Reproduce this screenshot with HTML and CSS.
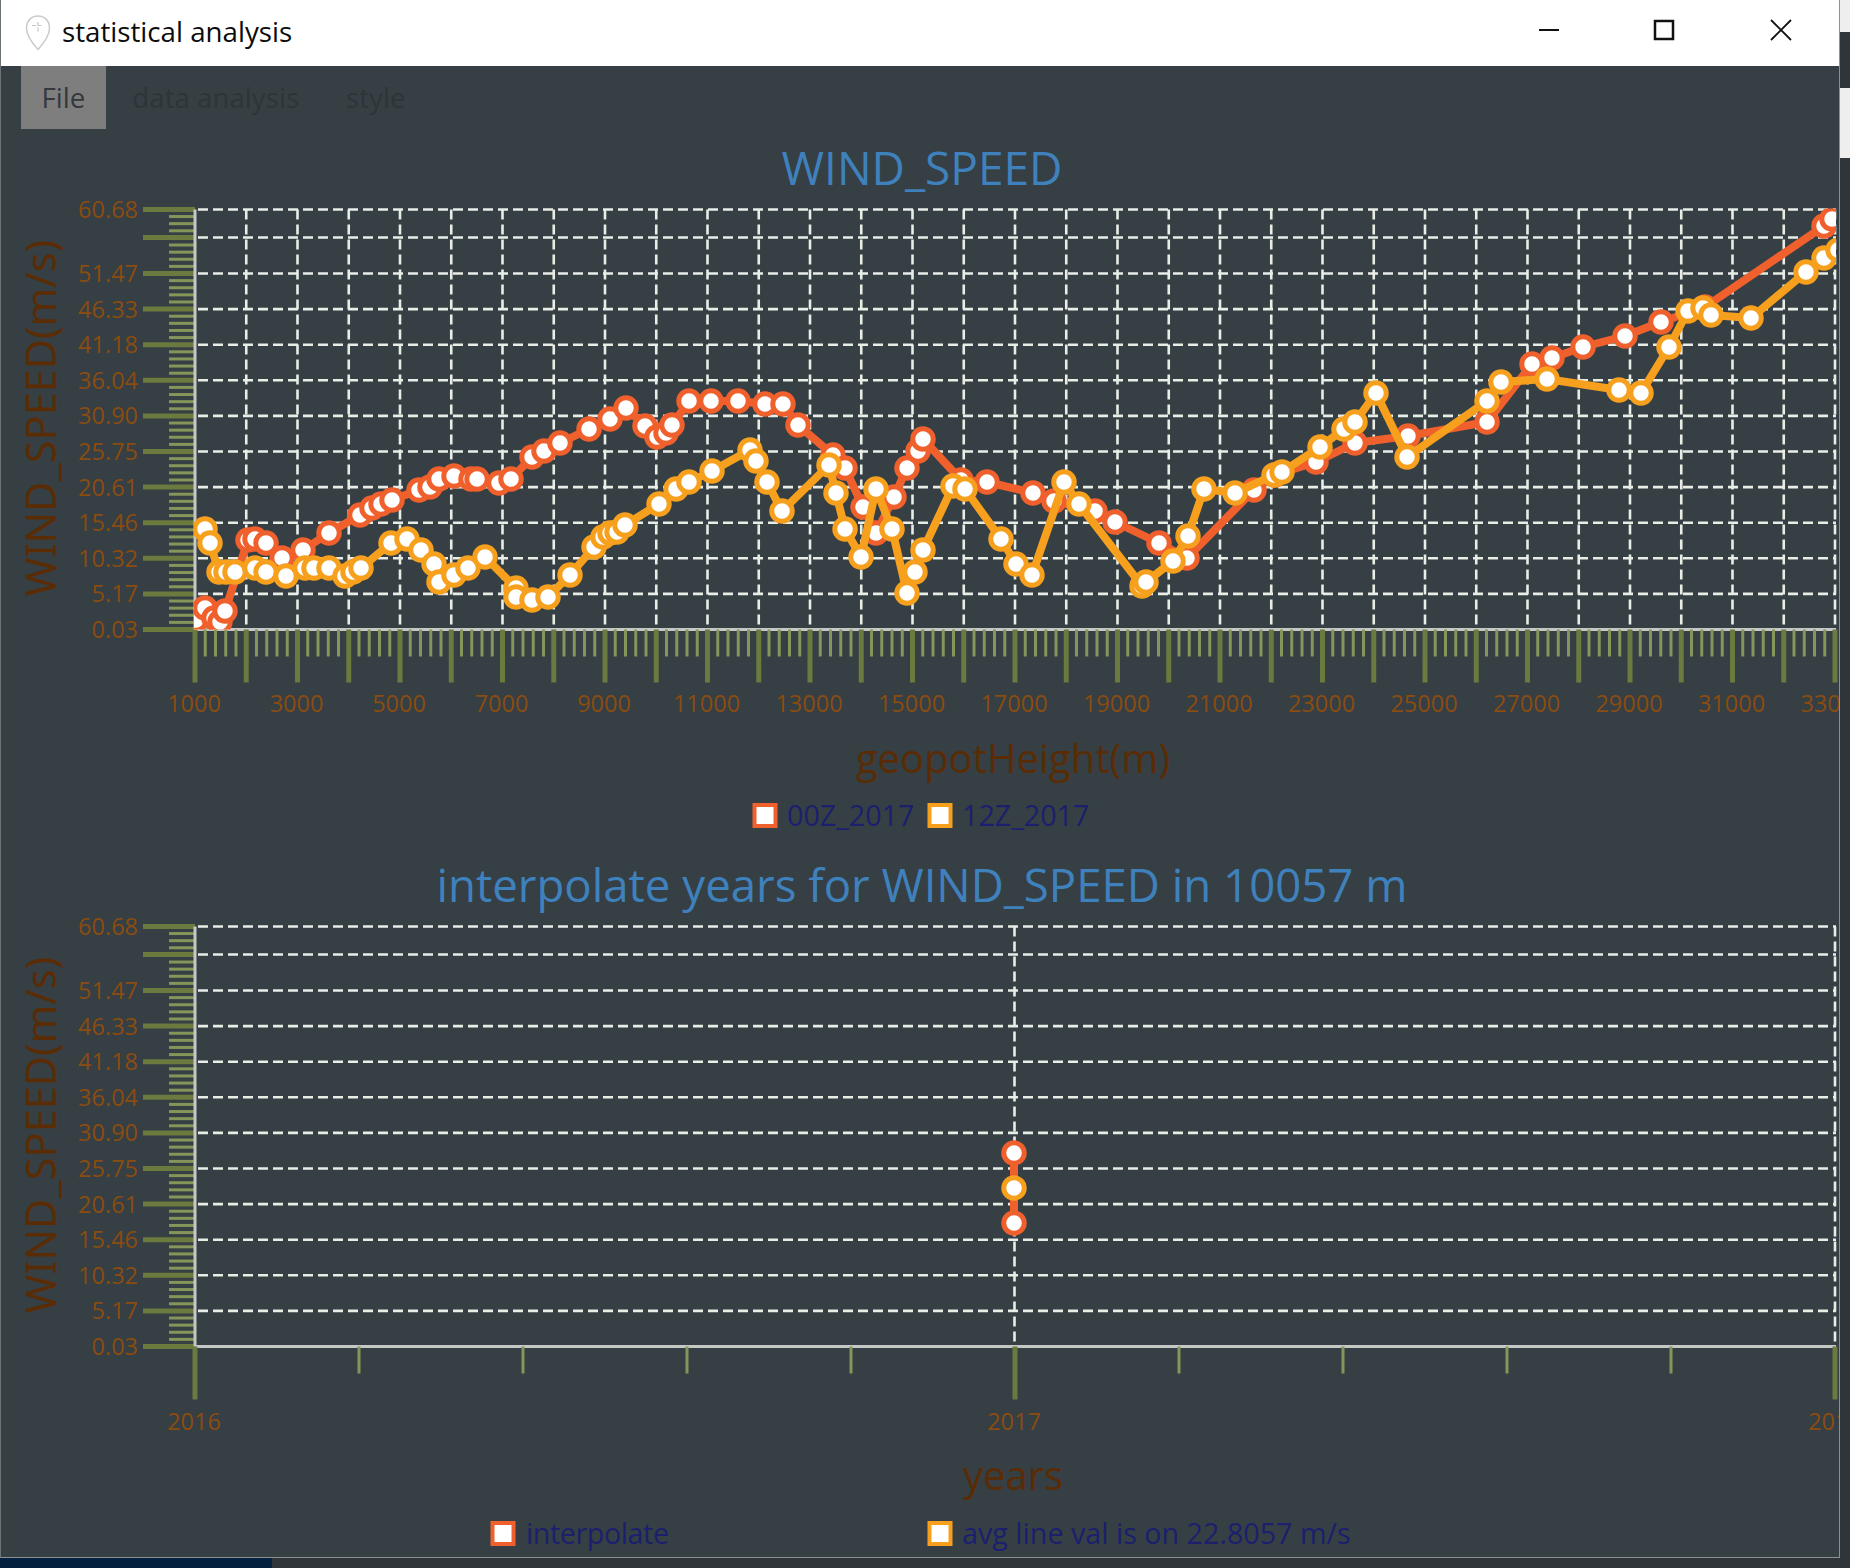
FILE: index.html
```html
<!DOCTYPE html>
<html>
<head>
  <meta charset="utf-8">
  <title>statistical analysis</title>
  <link rel="stylesheet" href="styles.css">
</head>
<body>
  <div class="desktop">
    <div class="window">
      <div class="titlebar">
        <svg class="app-icon" viewBox="0 0 26 36" width="26" height="36">
          <path d="M13 1C6 1 1.500 6 1.500 13C1.500 21 8 29 13 34.500C18 29 24.500 21 24.500 13C24.500 6 20 1 13 1Z" fill="#fff" stroke="#c9cbcb" stroke-width="1.500"/>
          <path d="M13 7V17M7 10.500H18" fill="none" stroke="#c4c6c6" stroke-width="1.200" stroke-dasharray="4 1.500"/>
        </svg>
        <span class="app-name">statistical analysis</span>
        <div class="win-buttons">
          <svg class="win-btn" viewBox="0 0 22 22" width="22" height="22"><path d="M1 11H21" stroke="#111" stroke-width="2"/></svg>
          <svg class="win-btn" viewBox="0 0 22 22" width="22" height="22"><rect x="2" y="2" width="18" height="18" fill="none" stroke="#111" stroke-width="2.500"/></svg>
          <svg class="win-btn win-close" viewBox="0 0 22 22" width="22" height="22"><path d="M1 1L21 21M21 1L1 21" stroke="#111" stroke-width="1.800"/></svg>
        </div>
      </div>
      <div class="menubar">
        <span class="menu-item active">File</span>
        <span class="menu-item">data analysis</span>
        <span class="menu-item">style</span>
      </div>
      <div class="chart" id="chart1"></div>
      <div class="chart" id="chart2"></div>
    </div>
    <div class="taskbar"><div class="task-active"></div></div>
    <div class="side-stub stub-top"></div>
    <div class="side-stub stub-mid"></div>
  </div>
  <script src="chart.js"></script>
</body>
</html>
```
FILE: styles.css
```css
html, body {
  margin: 0;
  padding: 0;
  background: #2b3136;
}

.desktop {
  width: 1850px;
  height: 1568px;
  position: relative;
  overflow: hidden;
  background: #2f3539;
  font-family: "Open Sans", "Noto Sans", sans-serif;
}

.window {
  width: 1840px;
  height: 1558px;
  box-sizing: border-box;
  background: #363f44;
  border-left: 1px solid #6d7478;
  border-right: 1px solid #8a9094;
  border-bottom: 1px solid #8a9094;
  overflow: hidden;
}

.titlebar {
  height: 66px;
  background: #fff;
  display: flex;
  align-items: center;
  padding-left: 24px;
}

.app-icon {
  margin-right: 11px;
}

.app-name {
  font-size: 27.700px;
  color: #0c0c0c;
  flex: 1;
  margin-top: -4px;
}

.win-buttons {
  display: flex;
  gap: 93px;
  padding-right: 47px;
  margin-top: -6px;
}

.win-btn {
  display: block;
}

.win-close {
  margin-left: 2px;
}

.menubar {
  height: 64px;
  display: flex;
  gap: 6px;
  padding-left: 20px;
  font-size: 27.700px;
  color: #2e3438;
}

.menu-item {
  padding: 12px 20.500px 0 20.500px;
  height: 63px;
  box-sizing: border-box;
}

.active {
  background: #7e7e7e;
  color: #33393d;
}

.chart {
  height: 717px;
}

.chart svg {
  display: block;
  margin-left: -1px;
}

.chart-title {
  font-size: 46px;
  fill: #3f81bc;
  text-anchor: middle;
}

.chart-title-long {
  font-size: 45.600px;
}

.axis-title {
  font-size: 40px;
  fill: #5a2c05;
  text-anchor: middle;
}

.axis-title-y {
  font-family: "Noto Sans", sans-serif;
  font-size: 41.500px;
}

.tick-label {
  font-size: 23.500px;
  fill: #8a4c10;
}

.legend-label {
  font-size: 28.700px;
  fill: #1b1f6e;
}

.major {
  stroke: #6b7a3f;
  stroke-width: 5;
}

.minor {
  stroke: #86965a;
  stroke-width: 3;
}

.grid {
  stroke: #e8ede6;
  stroke-width: 2.600;
  stroke-dasharray: 10 5;
  fill: none;
}

.axis-line {
  stroke: #c6c8c6;
  stroke-width: 3;
}

.series {
  fill: none;
  stroke-width: 8;
  stroke-linejoin: round;
}

.dot {
  fill: #fff;
  stroke-width: 5;
}

.legend-key {
  fill: #fff;
  stroke-width: 4;
}

.red {
  stroke: #f0602c;
}

.amber {
  stroke: #f6a01e;
}

.taskbar {
  height: 10px;
  background: #2f3539;
}

.task-active {
  width: 272px;
  height: 10px;
  background: #042240;
}

.side-stub {
  position: absolute;
  left: 1840px;
  width: 10px;
  background: #eeeeee;
}

.stub-top {
  top: 0;
  height: 32px;
}

.stub-mid {
  top: 88px;
  height: 70px;
}
```
FILE: chart.js
```js
var NS = "http://www.w3.org/2000/svg";

// all numbers are svg pixels of a chart box, box 1 starts at y=130
var PLOT = {left: 195, right: 1836, top: 79.5, bottom: 499.5};

var red = [[196,620],[205,608],[214,618],[220,622],[225,611],[248,540],[255,539],[266,543],[282,558],[303,550],[329,533],[360,515],[372,508],[381,504],[392,500],[419,490],[430,487],[439,479],[454,476],[471,479],[477,479],[499,483],[511,479],[532,457],[544,451],[560,443],[589,429],[610,419],[626,408],[645,426],[657,437],[666,433],[672,425],[689,401],[711,401],[738,401],[765,404],[783,404],[798,425],[833,455],[845,468],[863,507],[876,533],[894,497],[907,468],[918,451],[923,439],[961,480],[987,482],[1033,493],[1054,501],[1095,511],[1115,522],[1159,543],[1187,558],[1254,490],[1275,475],[1316,462],[1355,443],[1408,436],[1487,422],[1532,364],[1552,358],[1583,347],[1625,336],[1661,322],[1705,307],[1824,226],[1832,219]];

var amber = [[205,529],[210,543],[219,572],[226,572],[235,572],[255,568],[266,572],[286,576],[305,568],[314,568],[329,568],[345,576],[353,572],[361,568],[391,543],[407,539],[421,550],[434,564],[439,582],[454,575],[468,568],[485,557],[516,588],[516,597],[532,600],[548,597],[570,575],[594,547],[603,537],[610,533],[617,532],[625,525],[659,504],[676,489],[689,482],[712,471],[750,450],[756,461],[767,482],[782,511],[829,465],[836,493],[845,529],[861,557],[876,489],[892,529],[907,593],[915,572],[923,550],[953,486],[965,489],[1001,539],[1016,564],[1032,575],[1064,482],[1079,504],[1142,586],[1146,582],[1173,561],[1188,536],[1204,489],[1235,493],[1274,475],[1282,472],[1320,447],[1344,429],[1355,422],[1376,393],[1407,457],[1487,401],[1501,382],[1547,379],[1619,390],[1641,393],[1669,347],[1688,311],[1703,308],[1711,315],[1751,318],[1806,272],[1824,258],[1838,250]];

var yLabels = ["60.68","","51.47","46.33","41.18","36.04","30.90","25.75","20.61","15.46","10.32","5.17","0.03"];

function el(parent, name, attrs, text){
  var e = document.createElementNS(NS, name);
  for(var k in attrs){
    e.setAttribute(k, attrs[k]);
  }
  if(text){
    e.textContent = text;
  }
  parent.appendChild(e);
  return e;
}

function line(svg, x1, y1, x2, y2, cls){
  el(svg, "line", {x1:x1, y1:y1, x2:x2, y2:y2, "class":cls});
}

function yAxis(svg){
  var base = PLOT.bottom, step = 35.6;
  for(var i = 0; i < 13; i++){
    var y = i == 0 ? PLOT.top : i == 1 ? PLOT.top + 28 : base - (12 - i) * step;
    if(yLabels[i]){
      el(svg, "text", {x:138, y:y + 8.5, "class":"tick-label", "text-anchor":"end"}, yLabels[i]);
    }
    line(svg, 143, y, PLOT.left, y, "major");
  }
  for(var j = 1; j < 60; j++){
    var my = base - j * 7.12;
    if(j % 5 != 0 && my > PLOT.top){
      line(svg, 169, my, PLOT.left, my, "minor");
    }
  }
  line(svg, PLOT.left, PLOT.top, PLOT.left, PLOT.bottom, "axis-line");
}

function hGrid(svg){
  for(var i = 0; i < 12; i++){
    var y = i == 0 ? PLOT.top : i == 1 ? PLOT.top + 28 : PLOT.bottom - (12 - i) * 35.6;
    el(svg, "line", {x1:PLOT.left + 3, y1:y, x2:PLOT.right, y2:y, "class":"grid"});
  }
}

function dots(g, pts, cls, yOff){
  for(var i = 0; i < pts.length; i++){
    el(g, "circle", {cx:pts[i][0], cy:pts[i][1] - yOff, r:10.25, "class":"dot " + cls});
  }
}

function series(g, pts, cls, yOff){
  var s = pts.map(function(p){ return p[0] + "," + (p[1] - yOff); }).join(" ");
  el(g, "polyline", {points:s, "class":"series " + cls});
}

function legendKey(svg, x, y, cls){
  el(svg, "rect", {x:x, y:y, width:21, height:21, "class":"legend-key " + cls});
}

function makeChart(id, clipId){
  var svg = el(document.getElementById(id), "svg", {width:1839, height:717, viewBox:"0 0 1839 717"});
  var defs = el(svg, "defs", {});
  var clip = el(defs, "clipPath", {id:clipId});
  el(clip, "rect", {x:PLOT.left - 1, y:PLOT.top - 1, width:PLOT.right - PLOT.left + 1, height:PLOT.bottom - PLOT.top + 1});
  return {svg:svg, clip:"url(#" + clipId + ")"};
}

function yTitle(svg){
  el(svg, "text", {x:0, y:0, "class":"axis-title axis-title-y", transform:"translate(56,288) rotate(-90)"}, "WIND_SPEED(m/s)");
}

function topChart(){
  var c = makeChart("chart1", "clip1"), svg = c.svg;
  el(svg, "text", {x:922, y:55, "class":"chart-title"}, "WIND_SPEED");
  yTitle(svg);

  hGrid(svg);
  for(var i = 1; i <= 32; i++){
    var x = PLOT.left + i * 51.25;
    el(svg, "line", {x1:x, y1:PLOT.top, x2:x, y2:PLOT.bottom, "class":"grid"});
  }
  yAxis(svg);
  line(svg, PLOT.left, PLOT.bottom, PLOT.right, PLOT.bottom, "axis-line");
  for(var j = 0; j <= 160; j++){
    var tx = PLOT.left + j * 10.25;
    if(j % 5 == 0){
      line(svg, tx, PLOT.bottom, tx, PLOT.bottom + 53, "major");
    } else {
      line(svg, tx, PLOT.bottom, tx, PLOT.bottom + 27, "minor");
    }
  }
  for(var k = 0; k <= 16; k++){
    el(svg, "text", {x:PLOT.left - 1 + k * 102.5, y:582, "class":"tick-label", "text-anchor":"middle"}, String(1000 + k * 2000));
  }
  var g = el(svg, "g", {"clip-path":c.clip});
  series(g, red, "red", 130);
  dots(g, red, "red", 130);
  series(g, amber, "amber", 130);
  dots(g, amber, "amber", 130);

  el(svg, "text", {x:1013, y:643, "class":"axis-title"}, "geopotHeight(m)");
  legendKey(svg, 754.5, 675, "red");
  el(svg, "text", {x:787, y:696, "class":"legend-label"}, "00Z_2017");
  legendKey(svg, 929.5, 675, "amber");
  el(svg, "text", {x:962, y:696, "class":"legend-label"}, "12Z_2017");
}

function bottomChart(){
  var c = makeChart("chart2", "clip2"), svg = c.svg;
  el(svg, "text", {x:922, y:55, "class":"chart-title chart-title-long"}, "interpolate years for WIND_SPEED in 10057 m");
  yTitle(svg);

  hGrid(svg);
  el(svg, "line", {x1:1014.5, y1:PLOT.top, x2:1014.5, y2:PLOT.bottom, "class":"grid"});
  el(svg, "line", {x1:PLOT.right - 1, y1:PLOT.top, x2:PLOT.right - 1, y2:PLOT.bottom, "class":"grid"});
  yAxis(svg);
  line(svg, PLOT.left, PLOT.bottom, PLOT.right, PLOT.bottom, "axis-line");
  for(var j = 0; j <= 10; j++){
    var tx = PLOT.left + j * 164;
    if(j % 5 == 0){
      line(svg, tx, PLOT.bottom, tx, PLOT.bottom + 53, "major");
    } else {
      line(svg, tx, PLOT.bottom, tx, PLOT.bottom + 27, "minor");
    }
  }
  el(svg, "text", {x:PLOT.left - 1, y:583, "class":"tick-label", "text-anchor":"middle"}, "2016");
  el(svg, "text", {x:1014, y:583, "class":"tick-label", "text-anchor":"middle"}, "2017");
  el(svg, "text", {x:1835, y:583, "class":"tick-label", "text-anchor":"middle"}, "2018");

  var yOff = 847;
  series(svg, [[1014,1153],[1014,1223]], "red", yOff);
  dots(svg, [[1014,1153]], "red", yOff);
  dots(svg, [[1014,1223]], "red", yOff);
  dots(svg, [[1014,1188]], "amber", yOff);

  el(svg, "text", {x:1013, y:643, "class":"axis-title"}, "years");
  legendKey(svg, 492.5, 676, "red");
  el(svg, "text", {x:526, y:697, textLength:143, "class":"legend-label"}, "interpolate");
  legendKey(svg, 929.5, 676, "amber");
  el(svg, "text", {x:962, y:697, "class":"legend-label"}, "avg line val is on 22.8057 m/s");
}

topChart();
bottomChart();
```
